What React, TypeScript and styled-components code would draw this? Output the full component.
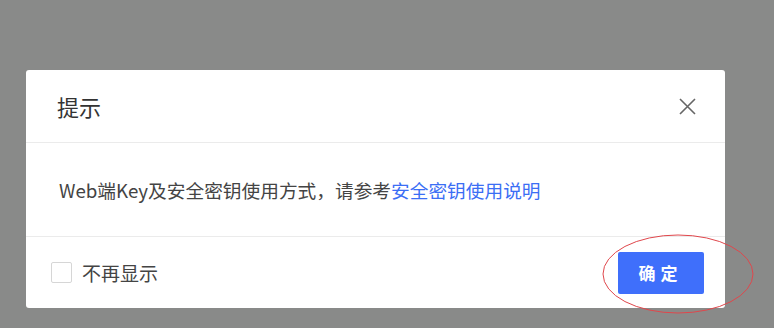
import { useState } from "react";
import styled, { createGlobalStyle } from "styled-components";

const GlobalStyle = createGlobalStyle`
  html, body {
    margin: 0;
    padding: 0;
  }
  body {
    font-family: "Noto Sans CJK SC", "Noto Sans", sans-serif;
  }
`;

const Page = styled.div`
  position: relative;
  width: 774px;
  height: 328px;
  box-sizing: border-box;
  padding: 70px 0 0 26px;
  background: #898a89;
  overflow: hidden;
`;

const Dialog = styled.div`
  width: 699px;
  background: #fff;
  border-radius: 3px;
  display: flex;
  flex-direction: column;
`;

const Header = styled.div`
  height: 73px;
  box-sizing: border-box;
  padding: 0 29px 0 31px;
  display: flex;
  align-items: center;
  justify-content: space-between;
  border-bottom: 1px solid #ebebeb;
`;

const Title = styled.div`
  font-size: 22px;
  color: #333;
`;

const CloseButton = styled.button`
  width: 18px;
  height: 18px;
  padding: 0;
  border: none;
  background: none;
  cursor: pointer;
  display: flex;
  align-items: center;
  justify-content: center;
`;

const Body = styled.div`
  height: 94px;
  box-sizing: border-box;
  padding: 0 33px;
  display: flex;
  align-items: center;
  font-size: 18.7px;
  color: #444;
  border-bottom: 1px solid #ebebeb;
`;

const Link = styled.a`
  color: #3b6ef5;
  text-decoration: none;
`;

const Footer = styled.div`
  height: 71px;
  box-sizing: border-box;
  padding: 0 21px 0 25px;
  display: flex;
  align-items: center;
  justify-content: space-between;
`;

const CheckLabel = styled.label`
  display: flex;
  align-items: center;
  gap: 10px;
  font-size: 19px;
  color: #444;
  cursor: pointer;
`;

const Box = styled.span<{ $checked: boolean }>`
  width: 21px;
  height: 21px;
  box-sizing: border-box;
  border: 1px solid #d6d6d6;
  border-radius: 2px;
  background: ${(p) => (p.$checked ? "#3f6ffb" : "#fff")};
`;

const PrimaryButton = styled.button`
  width: 86px;
  height: 42px;
  border: none;
  border-radius: 2px;
  background: #3f6ffb;
  color: #fff;
  font-family: inherit;
  font-size: 17px;
  font-weight: 700;
  letter-spacing: 5px;
  padding-left: 5px;
  cursor: pointer;
`;

const Annotation = styled.svg`
  position: absolute;
  left: 0;
  top: 0;
  pointer-events: none;
`;

const App = () => {
  const [checked, setChecked] = useState(false);

  return (
    <>
      <GlobalStyle />
      <Page>
        <Dialog>
          <Header>
            <Title>提示</Title>
            <CloseButton aria-label="关闭">
              <svg width="17" height="17" viewBox="0 0 17 17">
                <path d="M1 1L16 16M16 1L1 16" stroke="#666" strokeWidth="1.6" />
              </svg>
            </CloseButton>
          </Header>
          <Body>
            <span>
              Web端Key及安全密钥使用方式，请参考<Link href="#">安全密钥使用说明</Link>
            </span>
          </Body>
          <Footer>
            <CheckLabel onClick={() => setChecked(!checked)}>
              <Box $checked={checked} />
              不再显示
            </CheckLabel>
            <PrimaryButton>确定</PrimaryButton>
          </Footer>
        </Dialog>
        <Annotation width="774" height="328">
          <ellipse cx="678" cy="274" rx="75" ry="39" fill="none" stroke="#e0474c" strokeWidth="1" />
        </Annotation>
      </Page>
    </>
  );
};

export default App;
